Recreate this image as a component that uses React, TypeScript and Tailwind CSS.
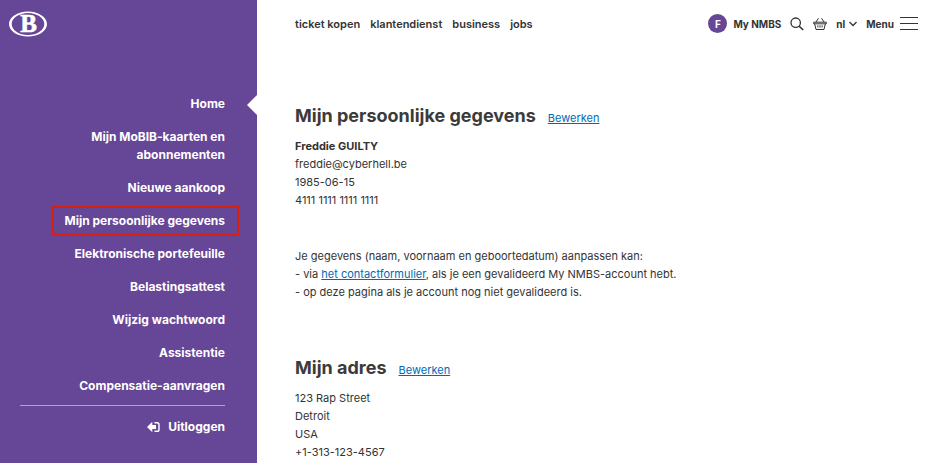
import React from "react";

type NavItem = { label: string; current?: boolean; marked?: boolean };

const navItems: NavItem[] = [
  { label: "Home", current: true },
  { label: "Mijn MoBIB-kaarten en abonnementen" },
  { label: "Nieuwe aankoop" },
  { label: "Mijn persoonlijke gegevens", marked: true },
  { label: "Elektronische portefeuille" },
  { label: "Belastingsattest" },
  { label: "Wijzig wachtwoord" },
  { label: "Assistentie" },
  { label: "Compensatie-aanvragen" },
];

const topLinks = ["ticket kopen", "klantendienst", "business", "jobs"];

function Logo() {
  return (
    <svg width="38" height="26" viewBox="0 0 38 26" aria-label="NMBS" role="img">
      <path
        fillRule="evenodd"
        fill="#fff"
        d="M19 .4C29.500 .4 38 6 38 13S29.500 25.600 19 25.600 0 20 0 13 8.500 .4 19 .4ZM19 1.900C10 1.900 2.700 6.900 2.700 13S10 24.100 19 24.100 35.300 19.100 35.300 13 28 1.900 19 1.900Z"
      />
      <text
        x="19.500"
        y="21"
        textAnchor="middle"
        className="fill-white stroke-white font-['Liberation_Serif',serif] text-[25px] font-bold"
        strokeWidth="0.6"
      >
        B
      </text>
    </svg>
  );
}

function LogoutIcon() {
  return (
    <svg width="13" height="12" viewBox="0 0 13 12" aria-hidden="true">
      <path d="M0 6 5.300 .8V4H9v4H5.300v3.200Z" fill="#fff" />
      <path d="M7.500 1.700h2.600q1.900 0 1.900 1.900v4.800q0 1.900-1.900 1.900H7.500" fill="none" stroke="#fff" strokeWidth="1.400" />
    </svg>
  );
}

function SearchIcon() {
  return (
    <svg width="14" height="14" viewBox="0 0 14 14" fill="none" stroke="#333" strokeWidth="1.300" aria-hidden="true">
      <circle cx="5.700" cy="5.700" r="4.700" />
      <path d="m9 9 4.200 4" strokeWidth="1.600" />
    </svg>
  );
}

function BasketIcon() {
  return (
    <svg width="14" height="14" viewBox="0 0 14 14" fill="none" stroke="#333" strokeWidth="1" aria-hidden="true">
      <path d="M.7 5.200h12.600v1.600H.7ZM1.700 6.900l1.300 5.600h8l1.300-5.600M3 5 5.400 1.300M11 5 8.600 1.300M4.900 8.300v2.200M7 8.300v2.200M9.100 8.300v2.200" />
    </svg>
  );
}

function Section({ title, children }: { title: string; children: React.ReactNode }) {
  return (
    <section>
      <div className="flex items-baseline gap-3">
        <h2 className="text-[18px] leading-7 font-bold text-[#3c3b3a]">{title}</h2>
        <a href="#" className="text-[#0069b4] underline">
          Bewerken
        </a>
      </div>
      {children}
    </section>
  );
}

export default function App() {
  return (
    <div className="flex bg-white font-[Inter,sans-serif] text-[11px] leading-[18px] text-[#333]">
      <aside className="mb-px flex w-[257px] shrink-0 flex-col bg-[#664696] pb-[27px] text-[12px] leading-[18px] font-bold text-white">
        <a href="#" className="mt-[11px] ml-[9px] self-start">
          <Logo />
        </a>
        <nav className="mt-[58px] pr-8 pl-5">
          <ul className="flex flex-col gap-[15px] text-right">
            {navItems.map((item) => (
              <li key={item.label} className="relative flex justify-end">
                <a href="#" className="relative max-w-[170px]">
                  {item.label}
                  {item.marked && (
                    <span className="absolute -top-1.5 -right-3.5 -bottom-1.5 -left-3 border-2 border-[#d9200f]" />
                  )}
                </a>
                {item.current && (
                  <span className="absolute top-0 -right-8 h-5 w-[10px] bg-white [clip-path:polygon(100%_0,0_50%,100%_100%)]" />
                )}
              </li>
            ))}
          </ul>
          <hr className="mt-[10px] border-t-1 border-[#b3a2cb]" />
          <a href="#" className="mt-3 flex items-center justify-end gap-2">
            <LogoutIcon />
            Uitloggen
          </a>
        </nav>
      </aside>

      <div className="min-w-0 flex-1 pr-[18px] pl-[38px]">
        <header className="flex h-[47px] items-center justify-between">
          <nav className="flex gap-[10px] font-semibold">
            {topLinks.map((label) => (
              <a key={label} href="#">
                {label}
              </a>
            ))}
          </nav>
          <div className="flex items-center gap-[9px] text-[10px] font-bold">
            <a href="#" className="flex items-center gap-1.5">
              <span className="flex size-[19px] items-center justify-center rounded-full bg-[#664696] text-white">F</span>
              My NMBS
            </a>
            <button type="button" aria-label="Zoeken">
              <SearchIcon />
            </button>
            <button type="button" aria-label="Winkelmand">
              <BasketIcon />
            </button>
            <button type="button" className="flex items-center gap-1">
              nl
              <svg width="8" height="6" viewBox="0 0 8 6" fill="none" stroke="#333" strokeWidth="1.300" aria-hidden="true">
                <path d="m.5 1 3.500 3.500L7.500 1" />
              </svg>
            </button>
            <button type="button" className="flex items-center gap-1.5">
              Menu
              <svg width="18" height="13" viewBox="0 0 18 13" stroke="#333" strokeWidth="1" aria-hidden="true">
                <path d="M0 .5h18M0 6.500h18M0 12.500h18" />
              </svg>
            </button>
          </div>
        </header>

        <main className="flex flex-col gap-[53px] pt-[55px]">
          <Section title="Mijn persoonlijke gegevens">
            <div className="mt-[7px]">
              <p className="font-bold">Freddie GUILTY</p>
              <p>freddie@cyberhell.be</p>
              <p>1985-06-15</p>
              <p>4111 1111 1111 1111</p>
            </div>
            <div className="mt-[38px]">
              <p>Je gegevens (naam, voornaam en geboortedatum) aanpassen kan:</p>
              <p>
                - via{" "}
                <a href="#" className="text-[#0069b4] underline">
                  het contactformulier
                </a>
                , als je een gevalideerd My NMBS-account hebt.
              </p>
              <p>- op deze pagina als je account nog niet gevalideerd is.</p>
            </div>
          </Section>
          <Section title="Mijn adres">
            <address className="mt-[7px] not-italic">
              <p>123 Rap Street</p>
              <p>Detroit</p>
              <p>USA</p>
              <p>+1-313-123-4567</p>
            </address>
          </Section>
        </main>
      </div>
    </div>
  );
}
